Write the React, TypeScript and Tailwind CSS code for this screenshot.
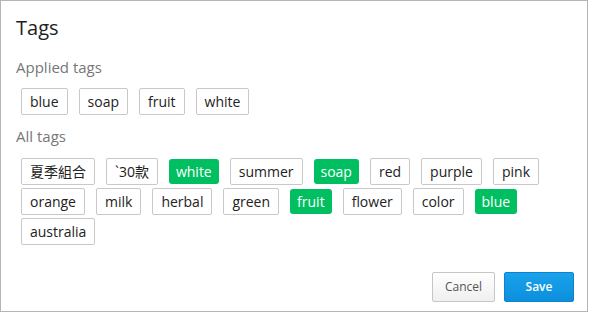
const applied = ["blue", "soap", "fruit", "white"];

const allTags: { name: string; on?: boolean }[] = [
  { name: "夏季組合" },
  { name: "`30款" },
  { name: "white", on: true },
  { name: "summer" },
  { name: "soap", on: true },
  { name: "red" },
  { name: "purple" },
  { name: "pink" },
  { name: "orange" },
  { name: "milk" },
  { name: "herbal" },
  { name: "green" },
  { name: "fruit", on: true },
  { name: "flower" },
  { name: "color" },
  { name: "blue", on: true },
  { name: "australia" },
];

function Tag({ name, on }: { name: string; on?: boolean }) {
  if (on) {
    return (
      <span className="h-[25px] px-[7px] rounded-[3px] bg-[#00bf60] text-white text-[14px] leading-[25px] whitespace-nowrap">
        {name}
      </span>
    );
  }
  return (
    <span className="h-[27px] px-[8px] rounded-[2px] border border-[#c9c9c9] bg-white text-[#222] text-[14px] leading-[25px] whitespace-nowrap">
      {name}
    </span>
  );
}

export default function App() {
  return (
    <div
      className="w-[588px] h-[312px] border border-[#b5b5b5] bg-white flex flex-col"
      style={{ fontFamily: '"Open Sans", "Noto Sans CJK TC", sans-serif' }}
    >
      <div className="px-[15px] pt-[13px]">
        <h1 className="text-[20px] leading-[28px] text-[#222]">Tags</h1>

        <p className="mt-[15px] text-[15px] leading-[20px] text-[#777]">Applied tags</p>
        <div className="mt-[11px] pl-[5px] flex flex-wrap gap-x-[11px]">
          {applied.map((t) => (
            <Tag key={t} name={t} />
          ))}
        </div>

        <p className="mt-[11px] text-[15px] leading-[20px] text-[#777]">All tags</p>
        <div className="mt-[12px] pl-[5px] pr-[15px] flex flex-wrap items-center gap-x-[11px] gap-y-[3px]">
          {allTags.map((t, i) => (
            <Tag key={i} name={t.name} on={t.on} />
          ))}
        </div>
      </div>

      {/* footer */}
      <div className="mt-auto pb-[9px] pr-[13px] flex justify-end gap-[9px]">
        <button className="h-[30px] w-[63px] rounded-[2px] border border-[#c6c6c6] bg-gradient-to-b from-white to-[#efefef] text-[12px] text-[#555]">
          Cancel
        </button>
        <button className="h-[30px] w-[70px] rounded-[2px] border border-[#0a84cf] bg-gradient-to-b from-[#1aa2ec] to-[#0b8fdc] text-[12px] font-semibold text-white">
          Save
        </button>
      </div>
    </div>
  );
}
